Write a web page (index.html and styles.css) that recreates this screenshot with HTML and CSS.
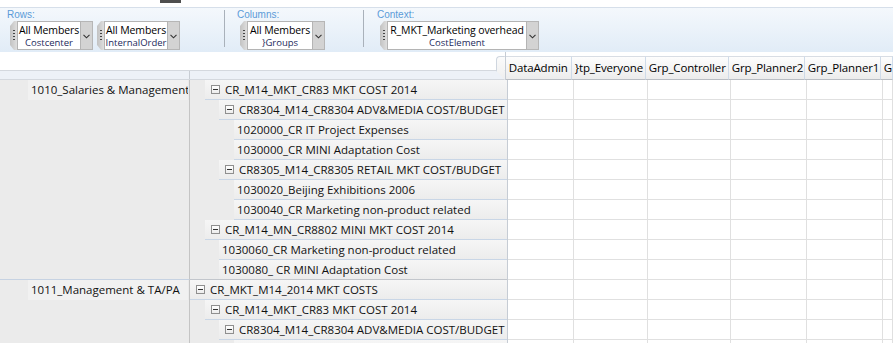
FILE: index.html
```html
<!DOCTYPE html>
<html>
<head>
<meta charset="utf-8">
<link rel="stylesheet" href="styles.css">
</head>
<body>
<div class="topstrip"><div class="toptab"></div></div>
<div class="toolbar">
  <div class="group g-rows">
    <div class="glabel">Rows:</div>
    <div class="widgets">
      <div class="member"><div class="grip"></div><div class="mbox w1"><div class="mname">All Members</div><div class="mdim">Costcenter</div></div><div class="mdrop"><svg width="7" height="5" viewBox="0 0 7 5"><path d="M0.5 0.8 L3.5 3.8 L6.5 0.8" stroke="#333" stroke-width="1.1" fill="none"/></svg></div></div>
      <div class="member"><div class="grip"></div><div class="mbox w1"><div class="mname">All Members</div><div class="mdim">InternalOrder</div></div><div class="mdrop"><svg width="7" height="5" viewBox="0 0 7 5"><path d="M0.5 0.8 L3.5 3.8 L6.5 0.8" stroke="#333" stroke-width="1.1" fill="none"/></svg></div></div>
    </div>
  </div>
  <div class="sep"></div>
  <div class="group g-cols">
    <div class="glabel">Columns:</div>
    <div class="widgets">
      <div class="member"><div class="grip"></div><div class="mbox w2"><div class="mname">All Members</div><div class="mdim">}Groups</div></div><div class="mdrop"><svg width="7" height="5" viewBox="0 0 7 5"><path d="M0.5 0.8 L3.5 3.8 L6.5 0.8" stroke="#333" stroke-width="1.1" fill="none"/></svg></div></div>
    </div>
  </div>
  <div class="sep"></div>
  <div class="group g-ctx">
    <div class="glabel">Context:</div>
    <div class="widgets">
      <div class="member"><div class="grip"></div><div class="mbox w3"><div class="mname">R_MKT_Marketing overhead</div><div class="mdim">CostElement</div></div><div class="mdrop"><svg width="7" height="5" viewBox="0 0 7 5"><path d="M0.5 0.8 L3.5 3.8 L6.5 0.8" stroke="#333" stroke-width="1.1" fill="none"/></svg></div></div>
    </div>
  </div>
</div>

<div class="main">
  <div class="hdr">
    <div class="lhdr">
      <div class="lhdr-top"></div>
      <div class="lhdr-strip"><div class="s1"></div><div class="s2"></div></div>
      <div class="corner"></div>
    </div>
    <div class="rhdr">
      <div class="hc d1">DataAdmin</div>
      <div class="hc d2">}tp_Everyone</div>
      <div class="hc d3">Grp_Controller</div>
      <div class="hc d4">Grp_Planner2</div>
      <div class="hc d5">Grp_Planner1</div>
      <div class="hc d6">G</div>
    </div>
  </div>

  <div class="row">
    <div class="c1"><div class="cc">1010_Salaries &amp; Management</div></div>
    <div class="c2"><div class="hcell exp l1"><span class="tog"></span>CR_M14_MKT_CR83 MKT COST 2014</div></div>
    <div class="data"><div class="d d1"></div><div class="d d2"></div><div class="d d3"></div><div class="d d4"></div><div class="d d5"></div><div class="d d6"></div></div>
  </div>
  <div class="row">
    <div class="c1"></div>
    <div class="c2"><div class="hcell exp l2"><span class="tog"></span>CR8304_M14_CR8304 ADV&amp;MEDIA COST/BUDGET</div></div>
    <div class="data"><div class="d d1"></div><div class="d d2"></div><div class="d d3"></div><div class="d d4"></div><div class="d d5"></div><div class="d d6"></div></div>
  </div>
  <div class="row">
    <div class="c1"></div>
    <div class="c2"><div class="hcell leaf l3">1020000_CR IT Project Expenses</div></div>
    <div class="data"><div class="d d1"></div><div class="d d2"></div><div class="d d3"></div><div class="d d4"></div><div class="d d5"></div><div class="d d6"></div></div>
  </div>
  <div class="row">
    <div class="c1"></div>
    <div class="c2"><div class="hcell leaf l3">1030000_CR MINI Adaptation Cost</div></div>
    <div class="data"><div class="d d1"></div><div class="d d2"></div><div class="d d3"></div><div class="d d4"></div><div class="d d5"></div><div class="d d6"></div></div>
  </div>
  <div class="row">
    <div class="c1"></div>
    <div class="c2"><div class="hcell exp l2"><span class="tog"></span>CR8305_M14_CR8305 RETAIL MKT COST/BUDGET</div></div>
    <div class="data"><div class="d d1"></div><div class="d d2"></div><div class="d d3"></div><div class="d d4"></div><div class="d d5"></div><div class="d d6"></div></div>
  </div>
  <div class="row">
    <div class="c1"></div>
    <div class="c2"><div class="hcell leaf l3">1030020_Beijing Exhibitions 2006</div></div>
    <div class="data"><div class="d d1"></div><div class="d d2"></div><div class="d d3"></div><div class="d d4"></div><div class="d d5"></div><div class="d d6"></div></div>
  </div>
  <div class="row">
    <div class="c1"></div>
    <div class="c2"><div class="hcell leaf l3">1030040_CR Marketing non-product related</div></div>
    <div class="data"><div class="d d1"></div><div class="d d2"></div><div class="d d3"></div><div class="d d4"></div><div class="d d5"></div><div class="d d6"></div></div>
  </div>
  <div class="row">
    <div class="c1"></div>
    <div class="c2"><div class="hcell exp l1"><span class="tog"></span>CR_M14_MN_CR8802 MINI MKT COST 2014</div></div>
    <div class="data"><div class="d d1"></div><div class="d d2"></div><div class="d d3"></div><div class="d d4"></div><div class="d d5"></div><div class="d d6"></div></div>
  </div>
  <div class="row">
    <div class="c1"></div>
    <div class="c2"><div class="hcell leaf l2">1030060_CR Marketing non-product related</div></div>
    <div class="data"><div class="d d1"></div><div class="d d2"></div><div class="d d3"></div><div class="d d4"></div><div class="d d5"></div><div class="d d6"></div></div>
  </div>
  <div class="row last">
    <div class="c1"></div>
    <div class="c2"><div class="hcell leaf l2">1030080_ CR MINI Adaptation Cost</div></div>
    <div class="data"><div class="d d1"></div><div class="d d2"></div><div class="d d3"></div><div class="d d4"></div><div class="d d5"></div><div class="d d6"></div></div>
  </div>
  <div class="row">
    <div class="c1"><div class="cc">1011_Management &amp; TA/PA</div></div>
    <div class="c2"><div class="hcell exp l0"><span class="tog"></span>CR_MKT_M14_2014 MKT COSTS</div></div>
    <div class="data"><div class="d d1"></div><div class="d d2"></div><div class="d d3"></div><div class="d d4"></div><div class="d d5"></div><div class="d d6"></div></div>
  </div>
  <div class="row">
    <div class="c1"></div>
    <div class="c2"><div class="hcell exp l1"><span class="tog"></span>CR_M14_MKT_CR83 MKT COST 2014</div></div>
    <div class="data"><div class="d d1"></div><div class="d d2"></div><div class="d d3"></div><div class="d d4"></div><div class="d d5"></div><div class="d d6"></div></div>
  </div>
  <div class="row">
    <div class="c1"></div>
    <div class="c2"><div class="hcell exp l2"><span class="tog"></span>CR8304_M14_CR8304 ADV&amp;MEDIA COST/BUDGET</div></div>
    <div class="data"><div class="d d1"></div><div class="d d2"></div><div class="d d3"></div><div class="d d4"></div><div class="d d5"></div><div class="d d6"></div></div>
  </div>
  <div class="row">
    <div class="c1"></div>
    <div class="c2"><div class="hcell leaf l3"></div></div>
    <div class="data"><div class="d d1"></div><div class="d d2"></div><div class="d d3"></div><div class="d d4"></div><div class="d d5"></div><div class="d d6"></div></div>
  </div>
</div>
</body>
</html>
```

FILE: styles.css
```css
* { box-sizing: border-box; }
html, body { margin: 0; padding: 0; }
body {
  width: 893px;
  height: 343px;
  overflow: hidden;
  background: #ffffff;
  font-family: "Open Sans", "Noto Sans", sans-serif;
  font-size: 11.5px;
  color: #111;
}

/* top strip */
.topstrip {
  height: 8px;
  background: #fff;
  border-bottom: 1px solid #d6dfea;
  padding-left: 160px;
}
.toptab {
  width: 21px;
  height: 3px;
  background: #4e4e4e;
}

/* toolbar */
.toolbar {
  height: 44px;
  display: flex;
  align-items: flex-start;
  background: linear-gradient(#f4f8fc, #e1ecf7);
}
.group { padding-top: 2px; }
.g-rows { margin-left: 7px; width: 217px; }
.g-cols { margin-left: 12px; width: 126px; }
.g-ctx { margin-left: 13px; }
.sep {
  width: 1px;
  height: 37px;
  margin-top: 2px;
  background: #a9b1ba;
}
.glabel {
  font-size: 10px;
  line-height: 10px;
  height: 10px;
  color: #5b9bd8;
  font-family: "Liberation Sans", Arial, sans-serif;
}
.widgets {
  display: flex;
  gap: 4px;
  margin-left: 3px;
  margin-top: 1px;
}
.member {
  display: flex;
  height: 29px;
}
.grip {
  position: relative;
  width: 7px;
  height: 29px;
  background: linear-gradient(90deg, #c2c2c2, #dedede);
  clip-path: polygon(4px 0, 100% 0, 100% 100%, 4px 100%, 0 calc(100% - 5px), 0 5px);
}
.grip::before {
  content: "";
  position: absolute;
  left: 3px;
  top: 9px;
  width: 2px;
  height: 11px;
  background: repeating-linear-gradient(#444 0 1px, transparent 1px 3px);
}
.mbox {
  height: 29px;
  background: #fff;
  border: 1px solid #b4b4b4;
  text-align: center;
  padding-top: 1px;
  white-space: nowrap;
}
.w1 { width: 64px; }
.w2 { width: 66px; }
.w3 { width: 140px; }
.mname {
  font-size: 10.5px;
  line-height: 14px;
  letter-spacing: -0.1px;
  color: #000;
}
.mdim {
  font-size: 9.5px;
  line-height: 12px;
  color: #1c2a5c;
}
.mdrop {
  width: 12px;
  height: 29px;
  background: #d3d3d3;
  border: 1px solid #b6b6b6;
  border-left: 0;
  display: flex;
  align-items: center;
  justify-content: center;
  padding-top: 1px;
}
.mdrop svg { display: block; }

/* main grid */
.main { background: #fff; }
.hdr {
  display: flex;
  height: 28px;
}
.lhdr {
  width: 507px;
  position: relative;
  display: flex;
  flex-direction: column;
}
.lhdr-top { height: 18px; background: #fff; }
.lhdr-strip {
  height: 10px;
  border-top: 1px solid #d4d8de;
  border-bottom: 1px solid #d4d8de;
  background: #edf1f7;
  display: flex;
}
.lhdr-strip .s1 { width: 190px; border-right: 1px solid #c8cdd4; }
.corner {
  position: absolute;
  right: 0;
  top: 4px;
  width: 9px;
  height: 24px;
  background: linear-gradient(#fbfbfb, #eeeeee);
  border-left: 1px solid #cfd6df;
  border-top: 1px solid #cfd6df;
  border-top-left-radius: 4px;
  clip-path: polygon(0 0, 100% 0, 100% 100%, 0 60%);
}
.rhdr {
  flex: 1;
  display: flex;
  padding-top: 4px;
  border-left: 1px solid #c6ccd4;
}
.hc {
  height: 24px;
  line-height: 21px;
  padding-left: 3px;
  white-space: nowrap;
  overflow: hidden;
  background: linear-gradient(#fdfdfd, #ececec);
  border-top: 1px solid #d8dde4;
  border-right: 1px solid #cfdbe9;
  border-bottom: 1px solid #b9bdc3;
  color: #000;
  font-size: 11.5px;
  letter-spacing: -0.15px;
}
.d1 { width: 66px; }
.d2 { width: 74px; }
.d3 { width: 83px; }
.d4 { width: 76px; }
.d5 { width: 76px; }
.d6 { flex: 1; }

.row {
  display: flex;
  height: 20px;
}
.c1 {
  width: 190px;
  height: 20px;
  background: #ebebeb;
  border-right: 1px solid #c4c4c4;
  padding-left: 28px;
  padding-right: 1px;
}
.cc {
  height: 20px;
  line-height: 19px;
  padding-left: 3px;
  background: #f1f1f1;
  white-space: nowrap;
  overflow: hidden;
  color: #111;
}
.row.last .c1 { border-bottom: 1px solid #c6d2e2; }
.c2 {
  width: 317px;
  height: 20px;
  background: #ebebeb;
}
.row.last .c2 { border-bottom: 1px solid #c2c6cc; }
.row.last .hcell { border-bottom: 0; }
.hcell {
  height: 100%;
  line-height: 19px;
  white-space: nowrap;
  overflow: hidden;
  background: linear-gradient(#f6f6f6, #ececec);
  border-bottom: 1px solid #c9d6e6;
  color: #111;
  display: flex;
  align-items: center;
}
.leaf { padding-left: 3px; }
.exp { padding-left: 6px; }
.l0 { margin-left: 0; }
.l1 { margin-left: 15px; }
.l2 { margin-left: 29px; }
.l3 { margin-left: 44px; }
.tog {
  flex: none;
  width: 9px;
  height: 9px;
  margin-right: 5px;
  border: 1px solid #8f8f8f;
  background: linear-gradient(#ffffff, #ececec);
  position: relative;
}
.tog::after {
  content: "";
  position: absolute;
  left: 1px;
  top: 3px;
  width: 5px;
  height: 1px;
  background: #333;
}
.data {
  flex: 1;
  display: flex;
  border-left: 1px solid #c6ccd4;
}
.d {
  height: 20px;
  background: #fff;
  border-right: 1px solid #e0e0e0;
  border-bottom: 1px solid #e0e0e0;
}
```
